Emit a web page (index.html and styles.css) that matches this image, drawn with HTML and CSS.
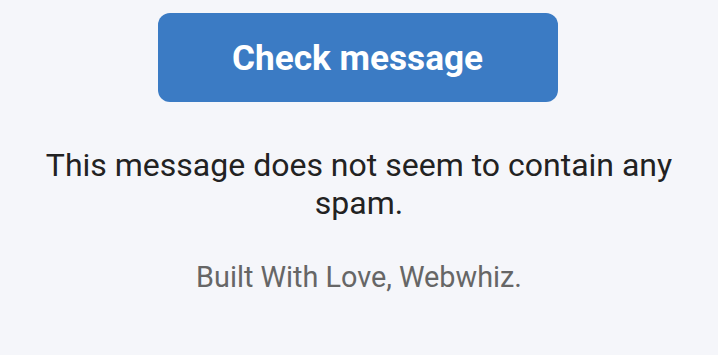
FILE: index.html
```html
<!DOCTYPE html>
<html>
<head>
<meta charset="utf-8">
<link rel="stylesheet" href="styles.css">
</head>
<body>
<main class="panel">
  <button class="check-btn">Check message</button>
  <p class="result">This message does not seem to contain any spam.</p>
  <p class="footer">Built With Love, Webwhiz.</p>
</main>
</body>
</html>
```
FILE: styles.css
```css
html, body {
  margin: 0;
  padding: 0;
  background: #f5f6fa;
  font-family: Roboto, "Liberation Sans", sans-serif;
}
.panel {
  display: flex;
  flex-direction: column;
  align-items: center;
  padding: 13px 30px 0;
}
.check-btn {
  width: 400px;
  height: 89px;
  margin-left: -3px;
  border: none;
  border-radius: 12px;
  background: #3b7bc4;
  color: #ffffff;
  font-family: Roboto, "Liberation Sans", sans-serif;
  font-weight: 700;
  font-size: 35.2px;
  cursor: pointer;
}
.result {
  margin: 45px 0 0;
  text-align: center;
  font-size: 32px;
  line-height: 37.5px;
  color: #222222;
}
.footer {
  margin: 38px 0 0;
  font-size: 28.8px;
  line-height: 34px;
  color: #666666;
}
```
